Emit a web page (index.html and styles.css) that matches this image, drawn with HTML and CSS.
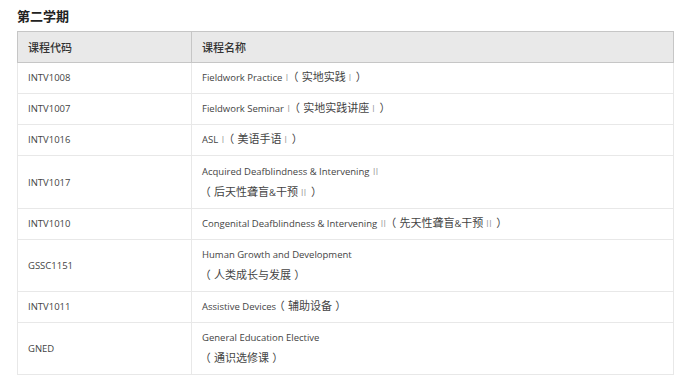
FILE: index.html
```html
<!DOCTYPE html>
<html lang="zh-CN">
<head>
<meta charset="utf-8">
<link rel="stylesheet" href="styles.css">
</head>
<body>
<div class="wrap">
  <h3 class="title">第二学期</h3>
  <table class="courses">
    <thead>
      <tr><th class="c1">课程代码</th><th>课程名称</th></tr>
    </thead>
    <tbody>
      <tr><td>INTV1008</td><td>Fieldwork Practice <span class="rn">I</span><span class="p">（</span><span class="zh">实地实践</span><span class="rn in">I</span><span class="p">）</span></td></tr>
      <tr><td>INTV1007</td><td>Fieldwork Seminar <span class="rn">I</span><span class="p">（</span><span class="zh">实地实践讲座</span><span class="rn in">I</span><span class="p">）</span></td></tr>
      <tr><td>INTV1016</td><td>ASL <span class="rn">I</span><span class="p">（</span><span class="zh">美语手语</span><span class="rn in">I</span><span class="p">）</span></td></tr>
      <tr class="tall"><td>INTV1017</td><td>Acquired Deafblindness &amp; Intervening <span class="rn">II</span><br><span class="p">（</span><span class="zh">后天性聋盲</span>&amp;<span class="zh">干预</span><span class="rn in">II</span><span class="p">）</span></td></tr>
      <tr><td>INTV1010</td><td>Congenital Deafblindness &amp; Intervening <span class="rn">II</span><span class="p">（</span><span class="zh">先天性聋盲</span>&amp;<span class="zh">干预</span><span class="rn in">II</span><span class="p">）</span></td></tr>
      <tr><td>GSSC1151</td><td>Human Growth and Development<br><span class="p">（</span><span class="zh">人类成长与发展</span><span class="p">）</span></td></tr>
      <tr><td>INTV1011</td><td>Assistive Devices<span class="p">（</span><span class="zh">辅助设备</span><span class="p">）</span></td></tr>
      <tr><td>GNED</td><td>General Education Elective<br><span class="p">（</span><span class="zh">通识选修课</span><span class="p">）</span></td></tr>
    </tbody>
  </table>
</div>
</body>
</html>
```

FILE: styles.css
```css
html, body {
  margin: 0;
  padding: 0;
  background: #fff;
}
.wrap {
  padding: 6px 17px 0 17px;
  font-family: "Open Sans", "Noto Sans CJK SC", sans-serif;
  color: #333;
}
.title {
  margin: 0 0 5px 0;
  font-family: "Noto Sans CJK SC", sans-serif;
  font-size: 13px;
  font-weight: bold;
  line-height: 20px;
  color: #222;
}
.courses {
  width: 657px;
  border-collapse: collapse;
  font-size: 9.5px;
}
.courses th {
  background: #e9e9e9;
  border: 1px solid #c6c6c6;
  text-align: left;
  font-family: "Noto Sans CJK SC", sans-serif;
  font-weight: 500;
  font-size: 11px;
  height: 30px;
  padding: 0 10px;
  color: #333;
}
.courses th.c1 {
  width: 153px;
}
.courses td {
  border: 1px solid #e8e8e8;
  padding: 4px 10px 5px 10px;
  line-height: 21px;
  vertical-align: middle;
  color: #444;
}
.courses tr.tall td {
  padding-top: 5px;
}
.zh {
  font-family: "Noto Sans CJK SC", sans-serif;
  font-size: 11px;
  line-height: 10px;
}
.p {
  display: inline-block;
  width: 12px;
  text-align: center;
  font-family: "Noto Sans CJK SC", sans-serif;
  font-feature-settings: "halt";
  font-size: 11px;
  line-height: 10px;
}
.rn {
  font-family: "Open Sans", sans-serif;
  font-size: 8.5px;
  color: #999;
  letter-spacing: 0.5px;
  margin: 0 1px;
}
.rn.in {
  margin-left: 3px;
}
```
